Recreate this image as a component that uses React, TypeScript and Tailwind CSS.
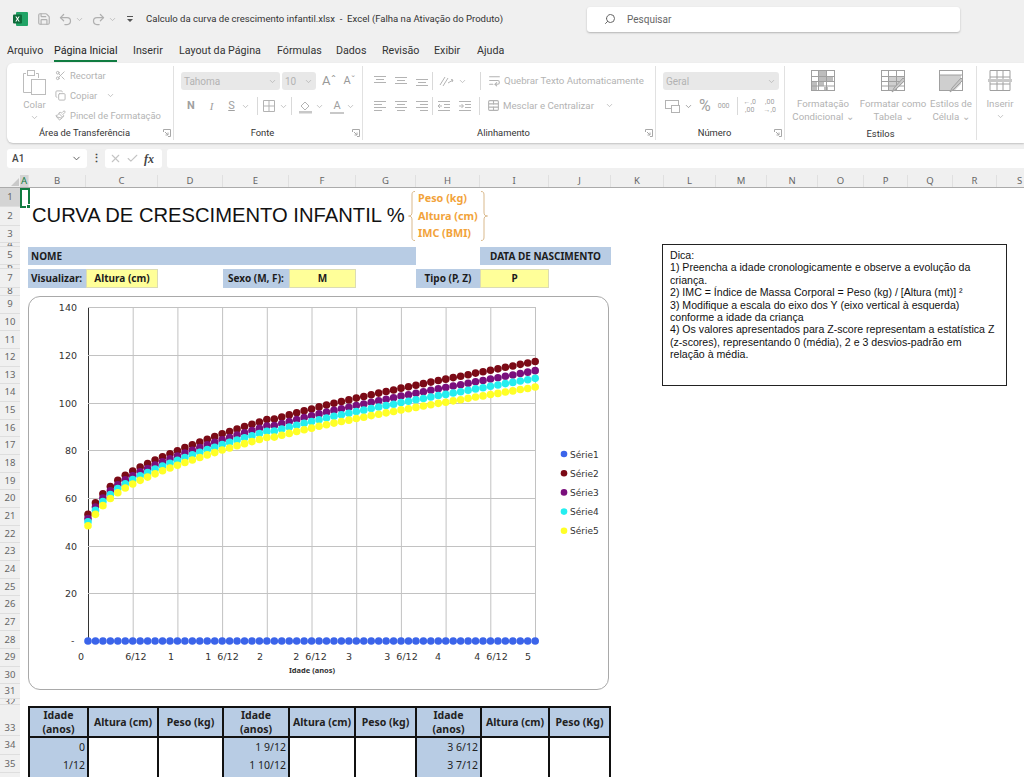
import React from "react";
import {
  Scissors, Copy, Paintbrush, ChevronDown, Undo2, Redo2, Save, Search, X, Check, WrapText, TableCellsMerge,
} from "lucide-react";

const cols: [string, number][] = [
  ["A", 9], ["B", 57], ["C", 72], ["D", 65], ["E", 66], ["F", 67], ["G", 60], ["H", 64], ["I", 69], ["J", 62],
  ["K", 53], ["L", 52], ["M", 51], ["N", 51], ["O", 46], ["P", 44], ["Q", 45], ["R", 44], ["S", 46],
];

const rows: [number, number][] = [
  [1, 19], [2, 19], [3, 17], [4, 4], [5, 18], [6, 4], [7, 19], [8, 8],
  ...Array.from({ length: 22 }, (_, i) => [i + 9, 17.67] as [number, number]),
  [31, 15], [32, 6], [33, 31], [34, 19], [35, 18], [36, 18],
];

const median = [
  49.9, 54.7, 58.4, 61.4, 63.9, 65.9, 67.6, 69.2, 70.6, 72.0, 73.3, 74.5, 75.7, 76.9, 78.0, 79.1, 80.2, 81.2, 82.3,
  83.2, 84.2, 85.1, 86.0, 86.9, 87.8, 88.0, 88.8, 89.6, 90.4, 91.2, 91.9, 92.7, 93.4, 94.1, 94.8, 95.4, 96.1, 96.7,
  97.4, 98.0, 98.6, 99.2, 99.9, 100.4, 101.0, 101.6, 102.2, 102.8, 103.3, 103.9, 104.4, 105.0, 105.6, 106.1, 106.7,
  107.2, 107.8, 108.3, 108.9, 109.4, 110.0,
];
const sd = (m: number) => (m < 24 ? 1.9 + (m / 24) * 1.1 : 3 + ((m - 24) / 36) * 1.3);
const px = (m: number) => 88 + m * 7.453;
const py = (v: number) => 641 - v * 2.383;
const series: { name: string; color: string; k: number | null }[] = [
  { name: "Série1", color: "#3b64ea", k: null },
  { name: "Série2", color: "#7b0a16", k: 1.7 },
  { name: "Série3", color: "#7a0f7c", k: 0.8 },
  { name: "Série4", color: "#25eef0", k: 0.05 },
  { name: "Série5", color: "#ffff26", k: -0.8 },
];

const D = "#b3b3b3";

function Lines({ a }: { a: "l" | "c" | "r" | "t" | "m" | "b" }) {
  if (a === "t" || a === "m" || a === "b") {
    const y = a === "t" ? 1 : a === "m" ? 2 : 4;
    return (
      <svg width="14" height="12" viewBox="0 0 14 12" stroke={D} fill="none">
        <path d={`M1 ${y}.5h12M3 ${y + 3}.5h8M1 ${y + 6}.5h12`} />
      </svg>
    );
  }
  const p =
    a === "l"
      ? "M1 1.5h12M1 4.5h8M1 7.5h12M1 10.5h8"
      : a === "c"
        ? "M1 1.5h12M3 4.5h8M1 7.5h12M3 10.5h8"
        : "M1 1.5h12M5 4.5h8M1 7.5h12M5 10.5h8";
  return (
    <svg width="14" height="12" viewBox="0 0 14 12" stroke={D} fill="none">
      <path d={p} />
    </svg>
  );
}

function Indent({ flip, className = "" }: { flip?: boolean; className?: string }) {
  return (
    <svg width="14" height="12" viewBox="0 0 14 12" stroke={D} fill="none" className={className}>
      <path d="M1 1.5h12M7 4.5h6M7 7.5h6M1 10.5h12" />
      <path d={flip ? "M1 6h4M3.5 4l2 2-2 2" : "M5 6H1M3 4L1 6l2 2"} />
    </svg>
  );
}

function Chev({ className = "" }: { className?: string }) {
  return <ChevronDown size={9} color={D} className={className} />;
}

function Sep({ className = "" }: { className?: string }) {
  return <div className={`w-px h-[18px] bg-[#d9d9d9] shrink-0 ${className}`} />;
}

function Launcher() {
  return (
    <svg width="8" height="8" viewBox="0 0 8 8" fill="none" stroke="#a8a8a8" className="absolute right-[2px] bottom-[3px]">
      <path d="M.5 3V.5H7.5V7.5H5M2 3l3 3M5 3.500V6H2.500" />
    </svg>
  );
}

function Group({ w, label, children }: { w: string; label: string; children: React.ReactNode }) {
  const launch = label !== "Estilos";
  return (
    <div className={`${w} shrink-0 relative flex flex-col border-r border-[#e1e1e1] my-[3px]`}>
      <div className="h-[60px] flex">{children}</div>
      <div className={`flex-1 text-center text-[9.4px] leading-[14px] pt-[4px] text-[#333] ${launch ? "pr-[11px]" : ""}`}>{label}</div>
      {launch && <Launcher />}
    </div>
  );
}

function SelectBox({ w, text }: { w: string; text: string }) {
  return (
    <div className={`${w} h-[18px] bg-[#e8e8e8] rounded-[3px] flex items-center justify-between pl-[3px] pr-[3px] text-[10px] text-[#b3b3b3]`}>
      <span>{text}</span>
      <Chev />
    </div>
  );
}

function TableIcon({ kind }: { kind: number }) {
  return (
    <svg width="26" height="24" viewBox="0 0 26 24" fill="none">
      {kind === 0 && <path d="M8 1h9v6h6v5H14v5H8zM2 13h5v8H2zM14 18h4v3h-4z" fill="#bdbdbd" />}
      {kind === 1 && <path d="M9 7h15v6l-8 8H9z" fill="#cfcfcf" />}
      {kind === 2 && <path d="M2 6h21v9l-7 7H2z" fill="#cfcfcf" />}
      <rect x="1.5" y="1.5" width="23" height="20" stroke="#a0a0a0" />
      {kind !== 2 && <path d="M1.5 7.5h23M1.5 12.5h23M1.5 17h23M8.5 1.5v20M16.5 1.5v20" stroke="#a0a0a0" />}
      {kind === 2 && <path d="M1.5 6h23" stroke="#a0a0a0" />}
      {kind !== 0 && <path d="M25 11L16 20l-4 3 2-4 9-10z" fill="#c8c8c8" stroke="#a0a0a0" />}
    </svg>
  );
}

function Ribbon() {
  return (
    <div className="h-[80px] ml-[7px] bg-white rounded-l-[6px] shadow-[0_1px_2px_rgba(0,0,0,0.2)] flex overflow-hidden">
      <Group w="w-[167px]" label="Área de Transferência">
        <div className="w-[41px] ml-[7px] flex flex-col items-center pt-[3px]">
          <svg width="25" height="27" viewBox="0 0 25 27" fill="none" stroke="#bcbcbc">
            <path d="M4 4.5H1.5v19H9M14 4.5h2.5V9" />
            <rect x="5.5" y="1.5" width="7" height="5" />
            <rect x="9.5" y="10.5" width="14" height="15" />
          </svg>
          <span className="text-[9.6px] leading-[12px] mt-[3px] text-[#b3b3b3]">Colar</span>
          <Chev className="mt-[2px]" />
        </div>
        <div className="flex flex-col text-[9.4px] text-[#b3b3b3] pt-[3px] gap-[7px] leading-[13px]">
          <div className="flex items-center gap-[4px]"><Scissors size={11} color={D} />Recortar</div>
          <div className="flex items-center gap-[4px]"><Copy size={11} color={D} />Copiar<Chev className="ml-[5px]" /></div>
          <div className="flex items-center gap-[4px]"><Paintbrush size={11} color={D} />Pincel de Formatação</div>
        </div>
      </Group>
      <Group w="w-[189px]" label="Fonte">
        <div className="pl-[7px] pt-[6px] flex flex-col gap-[7px]">
          <div className="flex items-center gap-[2px]">
            <SelectBox w="w-[99px]" text="Tahoma" />
            <SelectBox w="w-[34px]" text="10" />
            <span className="ml-[4px] text-[13px] text-[#999] leading-[18px]">Aˆ</span>
            <span className="ml-[5px] text-[11px] text-[#999] leading-[18px]">Aˇ</span>
          </div>
          <div className="flex items-center text-[11px] text-[#a0a0a0] h-[18px]">
            <span className="font-bold w-[20px] text-center">N</span>
            <span className="italic w-[21px] text-center font-['Liberation_Serif',serif]">I</span>
            <span className="underline w-[19px] text-center">S</span>
            <Chev />
            <Sep className="ml-[7px]" />
            <svg width="14" height="14" viewBox="0 0 14 14" stroke={D} fill="none" className="ml-[4px]"><path d="M1.500 1.500h11v11h-11zM7 1.500v11M1.500 7h11" /></svg>
            <Chev className="ml-[3px]" />
            <Sep className="ml-[3px]" />
            <svg width="15" height="15" viewBox="0 0 15 15" fill="none" stroke={D} className="ml-[6px]"><path d="M3 7l4-4 4 4-4 4z" /><rect x="1" y="12" width="13" height="2.500" fill="#c8c8c8" stroke="none" /></svg>
            <Chev className="ml-[2px]" />
            <span className="ml-[6px] w-[14px] text-center border-b-[2px] border-[#c8c8c8] leading-[13px]">A</span>
            <Chev className="ml-[2px]" />
          </div>
        </div>
      </Group>
      <Group w="w-[293px]" label="Alinhamento">
        <div className="pl-[10px] pt-[6px] flex flex-col gap-[7px]">
          <div className="flex items-center gap-[7px] h-[18px]">
            <Lines a="t" /><Lines a="m" /><Lines a="b" />
            <Sep className="-ml-[4px]" />
            <svg width="18" height="12" viewBox="0 0 18 12" fill="none" stroke={D} className="-ml-[2px]"><path d="M2 10L7 2M5 11l5-8M10 8l5-3M13 4.500l2 .5-1 2" /></svg>
            <Chev className="-ml-[5px]" />
            <Sep className="ml-[6px]" />
            <div className="flex items-center gap-[3px] text-[9.7px] text-[#b3b3b3] whitespace-nowrap"><WrapText size={13} color={D} />Quebrar Texto Automaticamente</div>
          </div>
          <div className="flex items-center gap-[7px] h-[18px]">
            <Lines a="l" /><Lines a="c" /><Lines a="r" />
            <Sep className="-ml-[4px]" />
            <Indent className="-ml-[3px]" /><Indent flip />
            <Sep />
            <div className="flex items-center gap-[3px] text-[9.7px] text-[#b3b3b3] whitespace-nowrap"><TableCellsMerge size={13} color={D} />Mesclar e Centralizar<Chev className="ml-[8px]" /></div>
          </div>
        </div>
      </Group>
      <Group w="w-[129px]" label="Número">
        <div className="pl-[7px] pt-[6px] flex flex-col gap-[7px]">
          <SelectBox w="w-[116px]" text="Geral" />
          <div className="flex items-center h-[18px] text-[#a0a0a0]">
            <svg width="16" height="13" viewBox="0 0 16 13" fill="none" stroke={D} className="ml-[2px]"><rect x=".5" y=".5" width="13" height="8" /><rect x="6.500" y="5.500" width="8" height="7" fill="#fff" /></svg>
            <ChevronDown size={9} color="#888" className="ml-[3px]" />
            <span className="text-[16px] ml-[6px] leading-none">%</span>
            <span className="text-[7px] ml-[7px] w-[15px]">000</span>
            <Sep className="ml-[4px]" />
            <span className="text-[7px] leading-[8px] ml-[5px] w-[14px] text-center">←,0<br />,00</span>
            <span className="text-[7px] leading-[8px] ml-[6px] w-[14px] text-center">,00<br />→,0</span>
          </div>
        </div>
      </Group>
      <Group w="w-[192px]" label="Estilos">
        <div className="flex text-[9.7px] leading-[13px] text-[#b3b3b3] text-center pt-[3px]">
          <div className="w-[76px] flex flex-col items-center"><TableIcon kind={0} /><span className="mt-[4px]">Formatação<br />Condicional ⌄</span></div>
          <div className="w-[64px] flex flex-col items-center"><TableIcon kind={1} /><span className="mt-[4px] whitespace-nowrap">Formatar como<br />Tabela ⌄</span></div>
          <div className="w-[52px] flex flex-col items-center"><TableIcon kind={2} /><span className="mt-[4px] whitespace-nowrap">Estilos de<br />Célula ⌄</span></div>
        </div>
      </Group>
      <div className="w-[46px] shrink-0 flex flex-col items-center pt-[6px] text-[9.7px] leading-[13px] text-[#b3b3b3]">
        <svg width="26" height="24" viewBox="0 0 26 24" fill="none" stroke="#a0a0a0"><path d="M3 1.500h20v20H3zM3 8h20M3 15h20M10 1.500v20M16 1.500v20" /><path d="M1 11.500h24" strokeWidth="3" stroke="#c8c8c8" /></svg>
        <span className="mt-[4px]">Inserir</span>
        <Chev className="mt-[2px]" />
      </div>
    </div>
  );
}

function TitleBar() {
  return (
    <div className="h-[38px] flex items-center text-[#555]">
      <svg width="15" height="14" viewBox="0 0 15 14" className="ml-[13px] shrink-0">
        <rect x="3" y="0" width="12" height="14" rx="1" fill="#21a366" />
        <rect x="0" y="2.500" width="9" height="9" rx="1" fill="#0e6b3a" />
        <path d="M2.300 4.500h1.200l1 1.600 1-1.600h1.200L5.100 7l1.600 2.500H5.500l-1-1.700-1 1.700H2.300L3.900 7z" fill="#fff" />
      </svg>
      <Save size={14} color="#b0b0b0" className="ml-[9px]" />
      <Undo2 size={15} color="#b0b0b0" className="ml-[7px]" />
      <Chev className="ml-[2px]" />
      <Redo2 size={15} color="#b0b0b0" className="ml-[7px]" />
      <Chev className="ml-[2px]" />
      <svg width="8" height="8" viewBox="0 0 8 8" className="ml-[9px]" fill="#555"><path d="M1 1h6v1H1zM1 4h6L4 7z" /></svg>
      <span className="ml-[12px] w-[441px] text-[9.55px] text-[#333] whitespace-pre">Calculo da curva de crescimento infantil.xlsx  -  Excel (Falha na Ativação do Produto)</span>
      <div className="w-[373px] h-[25px] bg-white rounded-[3px] shadow-[0_1px_2px_rgba(0,0,0,0.25)] flex items-center pl-[17px] text-[10px] text-[#666]">
        <Search size={12} color="#666" className="-scale-x-100" />
        <span className="ml-[11px]">Pesquisar</span>
      </div>
    </div>
  );
}

function Tabs() {
  const t = ["Arquivo", "Página Inicial", "Inserir", "Layout da Página", "Fórmulas", "Dados", "Revisão", "Exibir", "Ajuda"];
  return (
    <div className="h-[25px] grid grid-cols-[47px_79px_46px_98px_59px_46px_52px_43px_1fr] pl-[7px] text-[10.7px] text-[#333] whitespace-nowrap">
      {t.map((s) => (
        <div key={s} className="pt-[5px] leading-[15px]">
          <span className={`inline-block h-[19px] ${s === "Página Inicial" ? "border-b-2 border-[#107c41] text-[#222]" : ""}`}>{s}</span>
        </div>
      ))}
    </div>
  );
}

function FormulaBar() {
  return (
    <div className="h-[32px] pt-[6px] flex items-start text-[#444]">
      <div className="ml-[7px] w-[80px] h-[19px] bg-white rounded-[3px] flex items-center justify-between px-[5px] text-[10px] font-medium">
        A1<ChevronDown size={11} color="#555" />
      </div>
      <div className="w-[18px] text-center text-[11px] leading-[19px] font-bold">⋮</div>
      <div className="w-[57px] h-[19px] bg-white rounded-[3px] flex items-center pl-[4px] gap-[4px]">
        <X size={13} color="#c4c4c4" /><Check size={13} color="#c4c4c4" />
        <span className="ml-[1px] italic font-bold text-[12px] text-[#444] font-['Liberation_Serif',serif]">fx</span>
      </div>
      <div className="ml-[5px] flex-1 h-[19px] bg-white rounded-l-[3px]" />
    </div>
  );
}

function ColumnHeaders() {
  return (
    <div className="h-[13px] flex border-b border-[#ababab] bg-[#f0f0f0] text-[9.5px] leading-[12px] text-[#666] overflow-hidden font-['Noto_Sans',sans-serif]">
      <div className="w-[20px] shrink-0 relative">
        <div className="absolute right-[1px] bottom-[1px] w-0 h-0 border-l-[8px] border-l-transparent border-b-[8px] border-b-[#c9c9c9]" />
      </div>
      {cols.map(([c, w], i) => (
        <div
          key={c}
          style={{ width: w }}
          className={`shrink-0 text-center border-r border-[#e0e0e0] ${i === 0 ? "bg-[#d4d4d4] text-[#107c41]" : ""}`}
        >
          {c}
        </div>
      ))}
    </div>
  );
}

function RowHeaders() {
  return (
    <div className="w-[20px] shrink-0 bg-[#f0f0f0] text-[#666] text-[9.5px]">
      {rows.map(([n, h]) => (
        <div
          key={n}
          style={{ height: h }}
          className={`text-center overflow-hidden border-b border-[#dedede] flex justify-center ${n === 33 ? "items-end" : "items-center"} ${n === 1 ? "bg-[#d4d4d4]" : ""}`}
        >
          {n}
        </div>
      ))}
    </div>
  );
}

function Brace({ right }: { right?: boolean }) {
  return (
    <svg width="8" height="50" viewBox="0 0 8 50" fill="none" stroke="#d9b98c" className={right ? "-scale-x-100" : ""}>
      <path d="M7 .5C4 .5 4 2 4 5v16c0 3-1 4-3.500 4C3 25 4 26 4 29v16c0 3 0 4.500 3 4.500" />
    </svg>
  );
}

const band = "bg-[#b8cce4] flex items-center font-bold text-[10px] text-[#1c1c1c]";
const yellow = "bg-[#ffff99] border border-[#dcdcb4] flex items-center justify-center font-bold text-[10px] text-[#1c1c1c]";

function Chart() {
  const grid = "#c2c2c2";
  const ys = [140, 120, 100, 80, 60, 40, 20];
  const xl: [string, number][] = [
    ["0", 81], ["6/12", 136], ["1", 171], ["1  6/12", 222], ["2", 260], ["2  6/12", 310], ["3", 349], ["3  6/12", 401],
    ["4", 438], ["4  6/12", 491], ["5", 528],
  ];
  return (
    <div className="ml-[8px] w-[581px] h-[394px] border border-[#a9a9a9] rounded-[12px] bg-white overflow-hidden">
      <svg width="579" height="392" viewBox="29 297 579 392" className="block font-['DejaVu_Sans',sans-serif]">
        {Array.from({ length: 11 }, (_, i) => (
          <line key={i} x1={88 + (i * 447) / 10 + 0.5} x2={88 + (i * 447) / 10 + 0.5} y1={308} y2={641} stroke={i === 0 ? "#333" : grid} />
        ))}
        {ys.map((v) => (
          <line key={v} x1={88} x2={536} y1={Math.round(py(v)) + 0.5} y2={Math.round(py(v)) + 0.5} stroke={grid} />
        ))}
        {ys.map((v) => (
          <text key={v} x={77} y={py(v) + 4} textAnchor="end" fontSize="9.5" fill="#333">{v}</text>
        ))}
        <text x={71} y={644} fontSize="9.5" fill="#333">-</text>
        {xl.map(([s, x]) => (
          <text key={s} x={x} y={660} textAnchor="middle" fontSize="9.5" fill="#333" xmlSpace="preserve">{s}</text>
        ))}
        <text x={312} y={673} textAnchor="middle" fontSize="7.5" fontWeight="700" fill="#333" fontFamily="Noto Sans">Idade (anos)</text>
        {series.map((s) =>
          median.map((m, i) => (
            <circle key={s.name + i} cx={px(i)} cy={s.k === null ? 641 : py(m + s.k * sd(i))} r={3.8} fill={s.color} />
          )),
        )}
        {series.map((s, i) => (
          <g key={s.name}>
            <circle cx={564} cy={454 + i * 19.2} r={3.3} fill={s.color} />
            <text x={570} y={457.5 + i * 19.2} fontSize="9" fill="#333">{s.name}</text>
          </g>
        ))}
      </svg>
    </div>
  );
}

const heads = ["Idade (anos)", "Altura (cm)", "Peso (kg)", "Idade (anos)", "Altura (cm)", "Peso (kg)", "Idade (anos)", "Altura (cm)", "Peso (Kg)"];
const body = [
  ["0", "1 9/12", "3 6/12"],
  ["1/12", "1 10/12", "3 7/12"],
  ["2/12", "1 11/12", "3 8/12"],
];

function DataTable() {
  const grid = "grid grid-cols-[59px_70px_65px_66px_66px_61px_65px_68px_59px]";
  return (
    <div className="ml-[8px] w-[583px] border-x-2 border-t-2 border-[#111] text-[10.5px] text-[#222]">
      <div className={`${grid} h-[30px] border-b-2 border-[#111]`}>
        {heads.map((h, i) => (
          <div key={i} className={`bg-[#b8cce4] font-bold leading-[14px] flex items-center justify-center text-center ${i < 8 ? "border-r-2 border-[#111]" : ""}`}>
            {h.startsWith("Idade") ? <span>Idade<br />(anos)</span> : h}
          </div>
        ))}
      </div>
      {body.map((r, ri) => (
        <div key={ri} className={`${grid} ${ri === 0 ? "h-[19px]" : "h-[18px]"}`}>
          {heads.map((_, i) => (
            <div
              key={i}
              className={`flex items-center justify-end pr-[2px] ${i % 3 === 0 ? "bg-[#b8cce4]" : "bg-white"} ${i < 8 ? "border-r-2 border-[#111]" : ""}`}
            >
              {i % 3 === 0 ? r[i / 3] : ""}
            </div>
          ))}
        </div>
      ))}
    </div>
  );
}

function Sheet() {
  return (
    <div className="flex bg-white relative h-[589px] overflow-hidden font-['Noto_Sans',sans-serif]">
      <RowHeaders />
      <div className="flex-1 min-w-0">
        <div className="h-[59px] flex items-center pb-[4px]">
          <div className="ml-[12px] w-[376px] text-[20.2px] text-[#111] whitespace-nowrap font-['Liberation_Sans',sans-serif]">CURVA DE CRESCIMENTO INFANTIL %</div>
          <div className="flex items-center">
            <Brace />
            <div className="w-[64px] pl-[2px] text-[10.8px] font-bold text-[#f2a33a] leading-[17.5px] whitespace-nowrap">Peso (kg)<br />Altura (cm)<br />IMC (BMI)</div>
            <Brace right />
          </div>
        </div>
        <div className="h-[18px] flex">
          <div className={`ml-[8px] w-[388px] pl-[3px] ${band}`}>NOME</div>
          <div className={`ml-[64px] w-[131px] justify-center ${band}`}>DATA DE NASCIMENTO</div>
        </div>
        <div className="mt-[4px] h-[19px] flex">
          <div className={`ml-[8px] w-[58px] pl-[3px] ${band}`}>Visualizar:</div>
          <div className={`w-[72px] ${yellow}`}>Altura (cm)</div>
          <div className={`ml-[65px] w-[66px] justify-center ${band}`}>Sexo (M, F):</div>
          <div className={`w-[67px] ${yellow}`}>M</div>
          <div className={`ml-[60px] w-[64px] justify-center ${band}`}>Tipo (P, Z)</div>
          <div className={`w-[69px] ${yellow}`}>P</div>
        </div>
        <div className="mt-[8px]"><Chart /></div>
        <div className="mt-[16px]"><DataTable /></div>
      </div>
      <div className="absolute left-[20px] top-0 w-[10px] h-[20px] border-2 border-[#107c41]">
        <div className="absolute -right-[3px] -bottom-[3px] w-[5px] h-[5px] bg-[#107c41] border border-white" />
      </div>
      <div className="absolute left-[662px] top-[56px] w-[345px] h-[142px] border border-[#222] bg-white px-[7px] py-[4px] text-[10.6px] leading-[12.4px] text-[#111] font-['Liberation_Sans',sans-serif]">
        <div>Dica:</div>
        <div>1) Preencha a idade cronologicamente e observe a evolução da criança.</div>
        <div>2) IMC = Índice de Massa Corporal = Peso (kg) / [Altura (mt)] ²</div>
        <div>3) Modifique a escala do eixo dos Y (eixo vertical à esquerda) conforme a idade da criança</div>
        <div>4) Os valores apresentados para Z-score representam a estatística Z (z-scores), representando 0 (média), 2 e 3 desvios-padrão em relação à média.</div>
      </div>
    </div>
  );
}

export default function App() {
  return (
    <div className="w-[1024px] h-[777px] overflow-hidden bg-[#f0f0f0] font-['Roboto',sans-serif]">
      <TitleBar />
      <Tabs />
      <Ribbon />
      <FormulaBar />
      <ColumnHeaders />
      <Sheet />
    </div>
  );
}
